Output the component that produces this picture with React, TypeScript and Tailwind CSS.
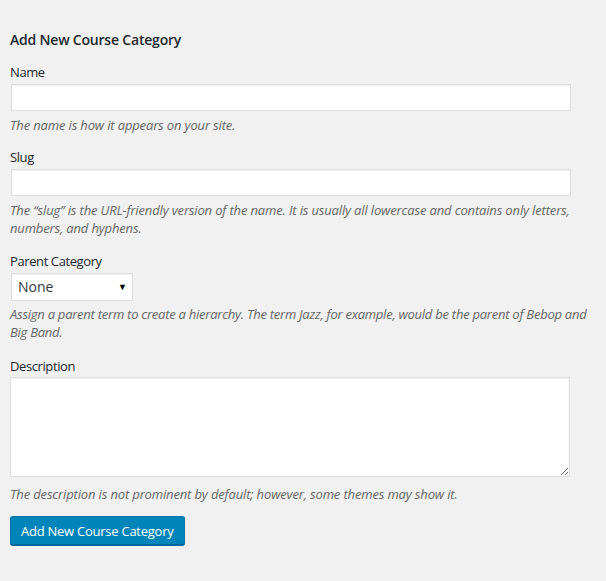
export default function App() {
  const inputClass =
    "block h-[27px] w-[560px] border border-[#dddddd] bg-white px-2 text-[14px] text-[#32373c] shadow-[inset_0_1px_2px_rgba(0,0,0,0.07)] outline-none";
  const helpClass = "text-[13px] italic leading-[18px] text-[#666666]";
  const labelClass = "block text-[13px] leading-[18px] tracking-[-0.4px] text-[#23282d]";

  return (
    <div
      className="min-h-screen bg-[#f1f1f1] pl-[10px] pt-[30px]"
      style={{ fontFamily: '"Open Sans", "Noto Sans", sans-serif' }}
    >
      <div className="w-[594px]">
        <h2 className="text-[14px] font-semibold leading-[20px] tracking-[-0.2px] text-[#23282d]">
          Add New Course Category
        </h2>

        <form className="mt-[13px]" onSubmit={(e) => e.preventDefault()}>
          <div>
            <label htmlFor="tag-name" className={labelClass}>
              Name
            </label>
            <input id="tag-name" type="text" className={`mt-[3px] ml-px ${inputClass}`} />
            <p className={`mt-[5px] tracking-[-0.15px] ${helpClass}`}>
              The name is how it appears on your site.
            </p>
          </div>

          <div className="mt-[14px]">
            <label htmlFor="tag-slug" className={labelClass}>
              Slug
            </label>
            <input id="tag-slug" type="text" className={`mt-[3px] ml-px ${inputClass}`} />
            <p className={`mt-[5px] tracking-[-0.15px] ${helpClass}`}>
              The “slug” is the URL-friendly version of the name. It is usually all lowercase and
              contains only letters, numbers, and hyphens.
            </p>
          </div>

          <div className="mt-[15px]">
            <label htmlFor="parent" className={labelClass}>
              Parent Category
            </label>
            <div className="relative mt-[3px] ml-px h-[28px] w-[122px] border border-[#dddddd] bg-white shadow-[inset_0_1px_2px_rgba(0,0,0,0.07)]">
              <span className="absolute left-[6px] top-[4px] text-[14px] leading-[18px] text-[#32373c]">
                None
              </span>
              <span className="absolute right-[5px] top-[6px] text-[9px] leading-[14px] text-black">
                ▼
              </span>
            </div>
            <p className={`mt-[4px] tracking-[-0.25px] ${helpClass}`}>
              Assign a parent term to create a hierarchy. The term Jazz, for example, would be the
              parent of Bebop and Big Band.
            </p>
          </div>

          <div className="mt-[16px]">
            <label htmlFor="tag-description" className={labelClass}>
              Description
            </label>
            <textarea
              id="tag-description"
              className="mt-[2px] block h-[100px] w-[560px] border border-[#dddddd] bg-white shadow-[inset_0_1px_2px_rgba(0,0,0,0.07)] outline-none"
            />
            <p className={`mt-[8px] tracking-[-0.15px] ${helpClass}`}>
              The description is not prominent by default; however, some themes may show it.
            </p>
          </div>

          <button
            type="submit"
            className="mt-[13px] h-[29px] rounded-[3px] border border-[#0073aa] border-b-[#006799] bg-[#0085ba] px-[10px] text-[13px] leading-[26px] tracking-[-0.25px] text-white shadow-[0_1px_0_#006799]"
          >
            Add New Course Category
          </button>
        </form>
      </div>
    </div>
  );
}
